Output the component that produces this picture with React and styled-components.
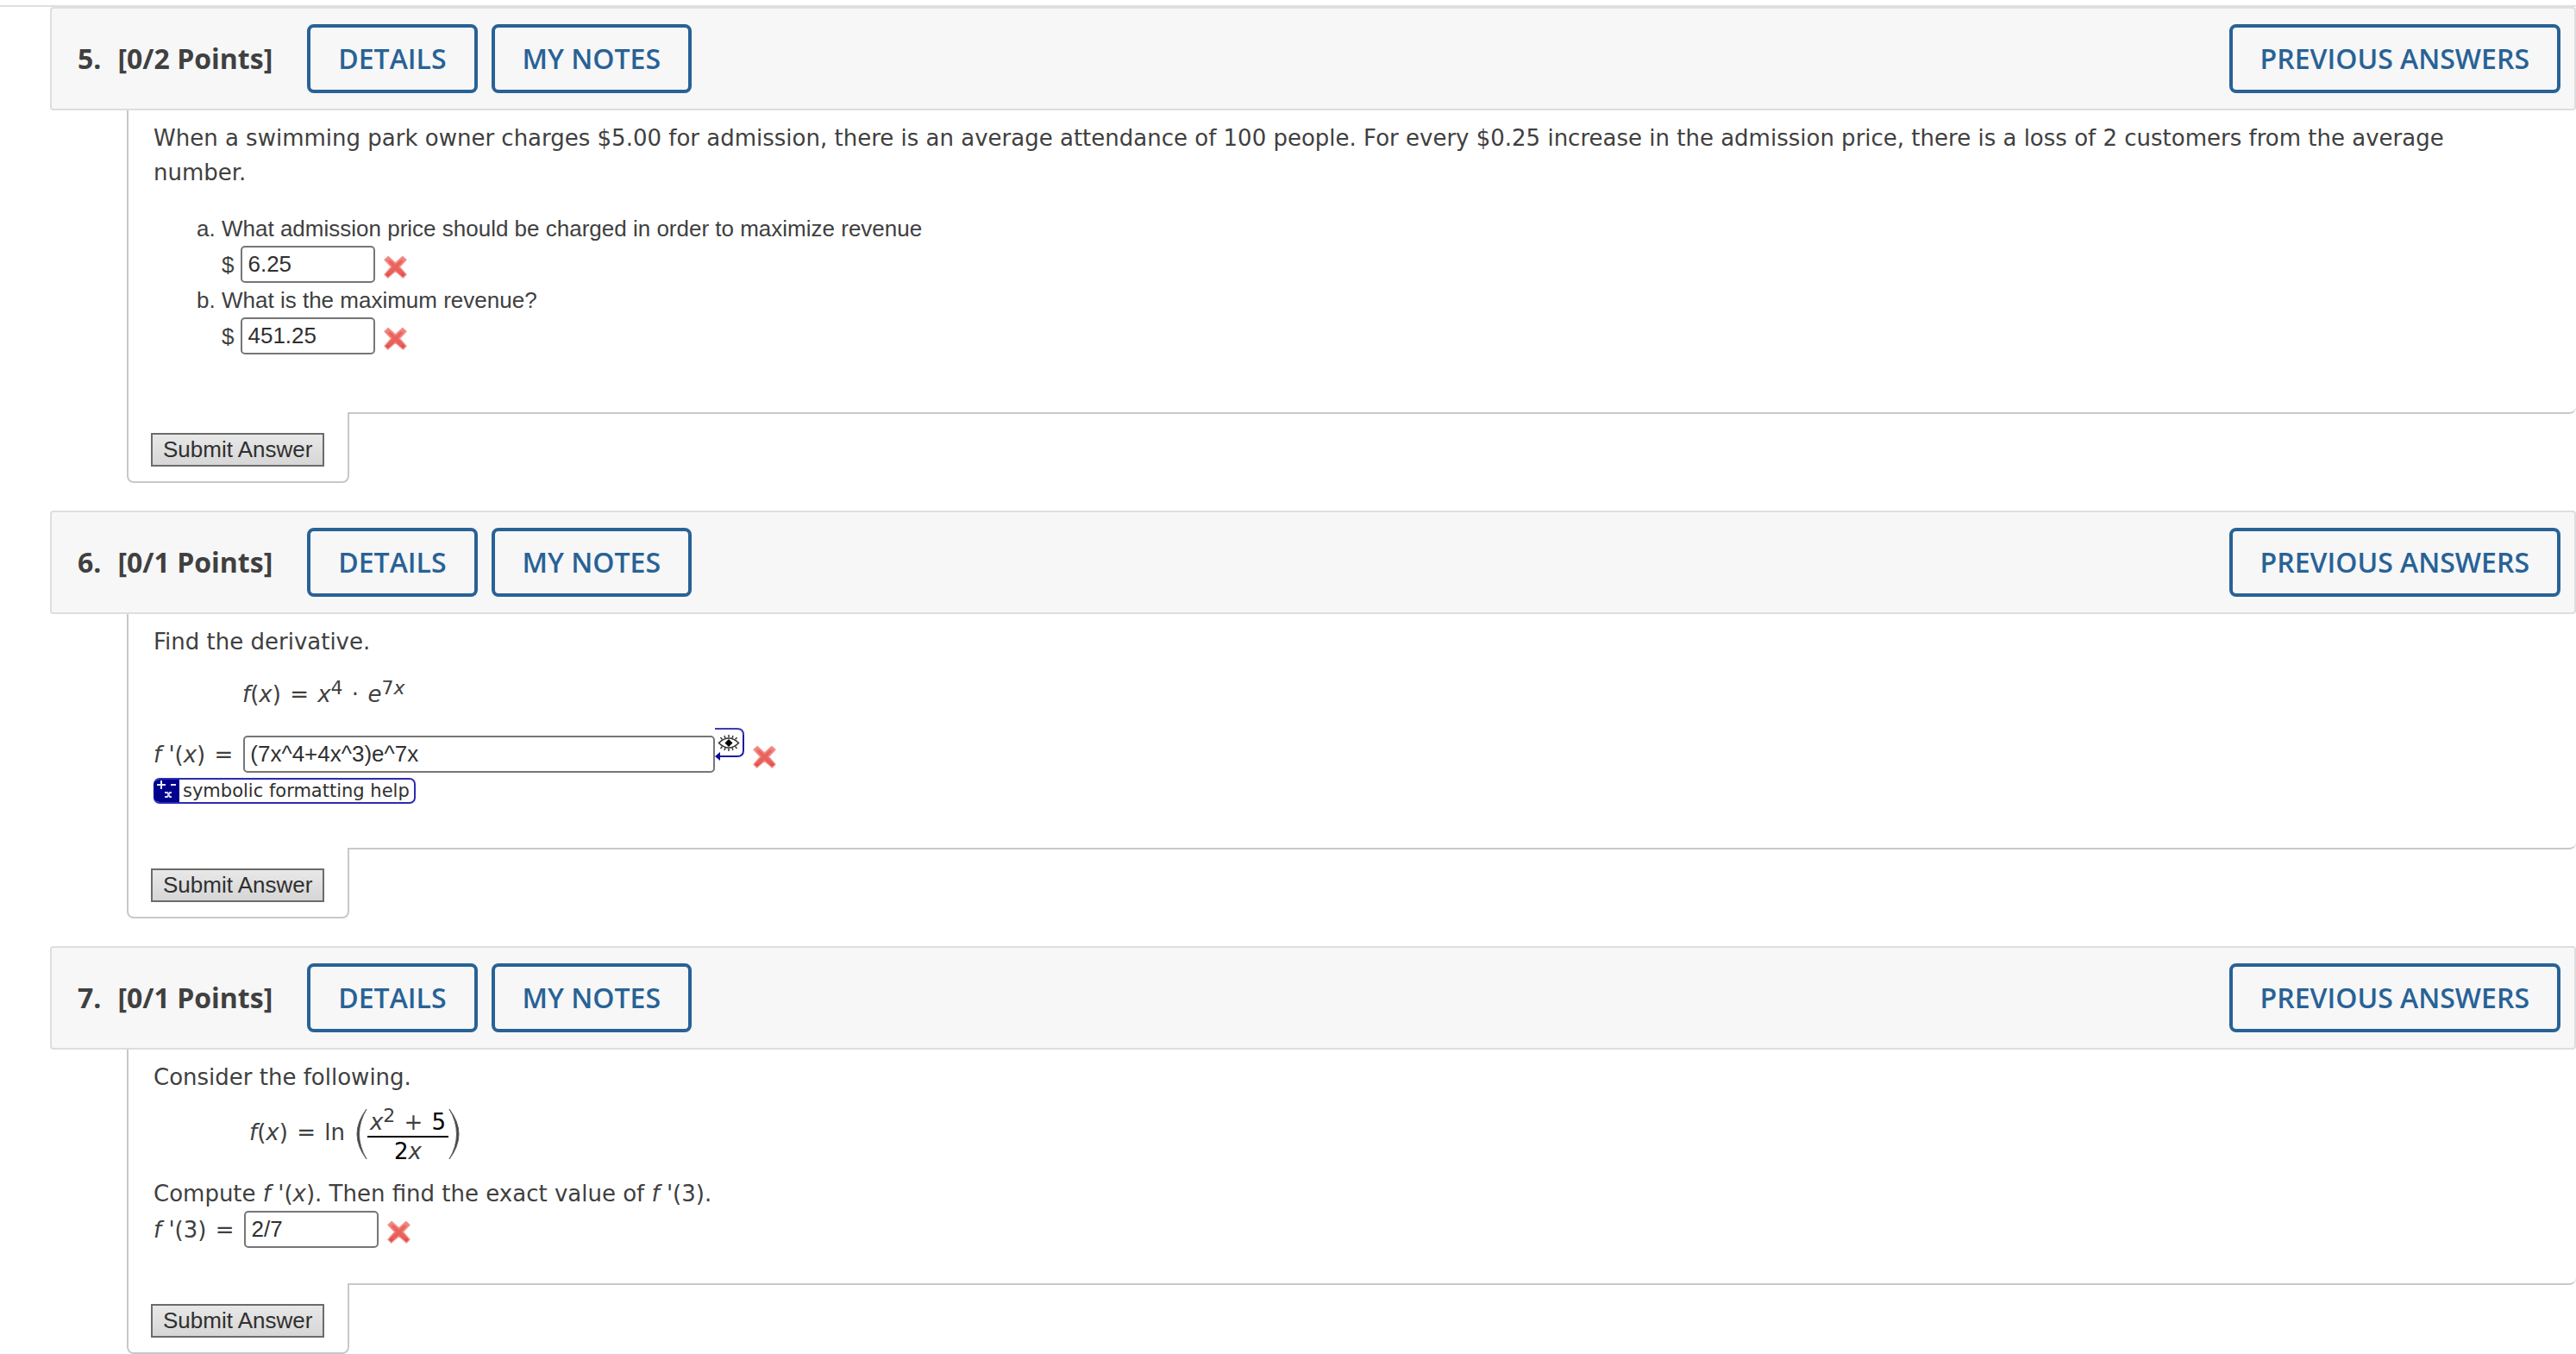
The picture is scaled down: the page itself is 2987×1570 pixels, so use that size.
import styled, { createGlobalStyle } from 'styled-components';

const WrongMark = () => (
    <Cross viewBox="0 0 26 26" role="img" aria-label="incorrect">
        <defs>
            <linearGradient id="wrong" x1="0" y1="0" x2="0" y2="1">
                <stop offset="0" stopColor="#f28b86"/>
                <stop offset="1" stopColor="#e0453f"/>
            </linearGradient>
        </defs>
        <path d="M5 1.5 13 8.6 21 1.5 25 5 17.6 13 25 21.5 21.5 25 13 17.6 4.5 25 1 21.5 8.4 13 1 5Z" fill="url(#wrong)" stroke="#f28f8a" strokeWidth="1.4" strokeLinejoin="round"/>
        <path d="M6.5 6.5 19.5 19.5M19.5 6.5 6.5 19.5" stroke="#ea625c" strokeWidth="2.4" strokeLinecap="round"/>
    </Cross>
)

const EyeIcon = () => (
    <svg width="34" height="39" viewBox="0 0 34 39" fill="none">
        <path d="M0 2H26Q33 2 33 9" stroke="#3c3cb4" strokeWidth="2"/>
        <path d="M33 9V27Q33 34 26 34H4" stroke="#1c1ca4" strokeWidth="2"/>
        <path d="M0 34 6 29V39Z" fill="#0a0a96"/>
        <path d="M4.5 18.5Q10 13 16 13T27.5 18.5Q22 24 16 24T4.5 18.5Z" stroke="#333" strokeWidth="1.6"/>
        <path d="M16 9V12M11 10 12 13M21 10 20 13M6.5 12 8.5 14.5M25.5 12 23.5 14.5M16 25V28M11 27 12 24M21 27 20 24M6.5 25 8.5 22.5M25.5 25 23.5 22.5" stroke="#444" strokeWidth="1.6"/>
        <path d="M16 14 20.5 18.5 16 23 11.5 18.5Z" fill="#000"/>
    </svg>
)

const SymbolsIcon = () => (
    <svg width="30" height="30" viewBox="0 0 30 30" fill="none">
        <path d="M0 0H30V30H0Z" fill="#00008f"/>
        <path d="M4 8H14M9 3V13M20 8H26" stroke="#e8e8f8" strokeWidth="2"/>
        <path d="M13 17H16L19 22H21M21 17H19L16 22H13" stroke="#d4d4f0" strokeWidth="2"/>
    </svg>
)

const Paren = ({ flip }) => (
    <svg width="14" height="60" viewBox="0 0 14 60" fill="none">
        <path d={flip ? "M1 1Q23 30 1 59Q18 30 1 1Z" : "M13 1Q-9 30 13 59Q-4 30 13 1Z"} fill="#404040" stroke="#606060" strokeWidth="1"/>
    </svg>
)

const Question = ({ number, points, space, children }) => (
    <Section>
        <Header>
            <Title>
                <span>{number}.</span>
                <span>[{points} Points]</span>
            </Title>
            <Actions>
                <HeaderButton type="button">DETAILS</HeaderButton>
                <HeaderButton type="button">MY NOTES</HeaderButton>
            </Actions>
            <HeaderButton type="button">PREVIOUS ANSWERS</HeaderButton>
        </Header>
        <Body $space={space}>{children}</Body>
        <SubmitTab>
            <SubmitButton type="submit">Submit Answer</SubmitButton>
        </SubmitTab>
    </Section>
)

const App = () => (
    <Page>
        <GlobalStyle/>
        <Question number={5} points="0/2" space={67}>
            <Text>
                When a swimming park owner charges $5.00 for admission, there is an average attendance of 100 people. For every $0.25 increase in the admission price, there is a loss of 2 customers from the average number.
            </Text>
            <Parts>
                <li>
                    <PartText>What admission price should be charged in order to maximize revenue</PartText>
                    <Answer>
                        <AnswerLabel htmlFor="price">$</AnswerLabel>
                        <AnswerInput id="price" type="text" defaultValue="6.25"/>
                        <WrongMark/>
                    </Answer>
                </li>
                <li>
                    <PartText>What is the maximum revenue?</PartText>
                    <Answer>
                        <AnswerLabel htmlFor="revenue">$</AnswerLabel>
                        <AnswerInput id="revenue" type="text" defaultValue="451.25"/>
                        <WrongMark/>
                    </Answer>
                </li>
            </Parts>
        </Question>

        <Question number={6} points="0/1" space={51}>
            <Text>Find the derivative.</Text>
            <Formula>
                <i>f</i>(<i>x</i>) <Op>=</Op> <i>x</i><Sup>4</Sup> <Op>·</Op> <i>e</i><Sup>7<i>x</i></Sup>
            </Formula>
            <Answer>
                <AnswerLabel htmlFor="derivative" $math><i>f</i> '(<i>x</i>) <Op>=</Op></AnswerLabel>
                <AnswerInput id="derivative" type="text" $wide defaultValue="(7x^4+4x^3)e^7x"/>
                <Preview type="button" aria-label="preview"><EyeIcon/></Preview>
                <WrongMark/>
            </Answer>
            <HelpLink href="#help">
                <SymbolsIcon/>
                <span>symbolic formatting help</span>
            </HelpLink>
        </Question>

        <Question number={7} points="0/1" space={41}>
            <Text>Consider the following.</Text>
            <Fractional>
                <span><i>f</i>(<i>x</i>) <Op>=</Op> ln</span>
                <Paren/>
                <Fraction>
                    <Numerator><i>x</i><Sup>2</Sup> <Op>+</Op> <b>5</b></Numerator>
                    <Denominator><b>2</b><i>x</i></Denominator>
                </Fraction>
                <Paren flip/>
            </Fractional>
            <Text>Compute <i>f</i> '(<i>x</i>). Then find the exact value of <i>f</i> '(3).</Text>
            <Answer>
                <AnswerLabel htmlFor="value" $math><i>f</i> '(3) <Op>=</Op></AnswerLabel>
                <AnswerInput id="value" type="text" defaultValue="2/7"/>
                <WrongMark/>
            </Answer>
        </Question>
    </Page>
)

// styling using the styled components
const GlobalStyle = createGlobalStyle`
    *{
        box-sizing:border-box;
    }
    body{
        margin:0;
        background-color:white;
        overflow-x:hidden;
    }
`
const Page = styled.main`
    margin-top:6px;
    padding-left:58px;
    border-top:2px solid #e0e0e0;
    color:#404040;
    font-family:"DejaVu Sans", Verdana, sans-serif;
    font-size:26px;
    line-height:40px;
`
const Section = styled.section`
    & + &{
        margin-top:32px;
    }
`
const Header = styled.header`
    display:flex;
    align-items:center;
    padding:18px 16px 18px 30px;
    border:2px solid #dedede;
    border-radius:4px;
    background-color:#f7f7f7;
    font-family:"Open Sans", sans-serif;
`
const Title = styled.h2`
    display:flex;
    gap:19px;
    margin:0 40px 0 0;
    font-size:32px;
    font-weight:700;
`
const Actions = styled.div`
    display:flex;
    flex-grow:1;
    gap:16px;
`
const HeaderButton = styled.button`
    padding:16px 32px;
    border:4px solid #286296;
    border-radius:8px;
    background-color:#f7f7f7;
    color:#286296;
    font-family:inherit;
    font-size:32px;
    font-weight:600;
    line-height:40px;
    cursor:pointer;
`
const Body = styled.div`
    margin-left:89px;
    padding:12px 130px ${({ $space }) => $space}px 29px;
    border:solid #c8c8c8;
    border-width:0 0 2px 2px;
    border-bottom-right-radius:8px;
`
const SubmitTab = styled.div`
    width:fit-content;
    margin:-2px 0 0 89px;
    padding:24px 27px 17px 26px;
    border:2px solid #c8c8c8;
    border-top:none;
    border-radius:0 0 8px 8px;
    background-color:white;
`
const SubmitButton = styled.button`
    display:block;
    padding:0 12px;
    border:2px solid #6b6b6b;
    background:linear-gradient(#e8e8e8, #d6d6d6);
    color:#303030;
    font-family:"Liberation Sans", Arial, sans-serif;
    font-size:26px;
    line-height:35px;
    cursor:pointer;
`
const Text = styled.p`
    margin:0;
`
const Parts = styled.ol`
    margin:25px 0 0;
    padding-left:79px;
    list-style:lower-alpha;
    font-family:"Liberation Sans", Arial, sans-serif;
`
const PartText = styled.div`
    height:40px;
`
const Answer = styled.div`
    display:flex;
    align-items:center;
`
const AnswerLabel = styled.label`
    margin-right:${({ $math }) => $math ? '10px' : '8px'};
`
const AnswerInput = styled.input`
    width:${({ $wide }) => $wide ? '547px' : '156px'};
    height:43px;
    padding:0 6px;
    border:2px solid #767676;
    border-radius:5px;
    background-color:white;
    color:#303030;
    font-family:"Liberation Sans", Arial, sans-serif;
    font-size:26px;
`
const Cross = styled.svg`
    width:27px;
    height:27px;
    margin:6px 0 0 10px;
`
const Preview = styled.button`
    display:flex;
    align-self:flex-start;
    margin-top:-10px;
    padding:0;
    border:none;
    background:none;
    cursor:pointer;
`
const Formula = styled.div`
    margin:21px 0 28px;
    padding-left:103px;
`
const Fractional = styled.div`
    display:flex;
    align-items:flex-start;
    margin:16px 0 11px;
    padding-left:111px;
    line-height:56px;
    svg{
        margin-left:12px;
    }
    div + svg{
        margin-left:0;
    }
`
const Fraction = styled.div`
    display:flex;
    flex-direction:column;
    align-items:center;
    line-height:32px;
    b{
        color:black;
        font-weight:400;
    }
`
const Numerator = styled.span`
    height:34px;
    padding:0 3px;
    border-bottom:2px solid black;
`
const Denominator = styled.span`
    height:34px;
`
const Op = styled.span`
    margin:0 2px;
`
const Sup = styled.sup`
    font-size:22px;
    line-height:0;
    vertical-align:9px;
`
const HelpLink = styled.a`
    display:flex;
    align-items:center;
    width:fit-content;
    height:30px;
    margin-top:6px;
    padding-right:5px;
    border:2px solid #2c2cb0;
    border-left:none;
    border-radius:7px;
    overflow:hidden;
    color:#303030;
    font-size:21px;
    text-decoration:none;
    span{
        padding-left:4px;
    }
`

export default App;
